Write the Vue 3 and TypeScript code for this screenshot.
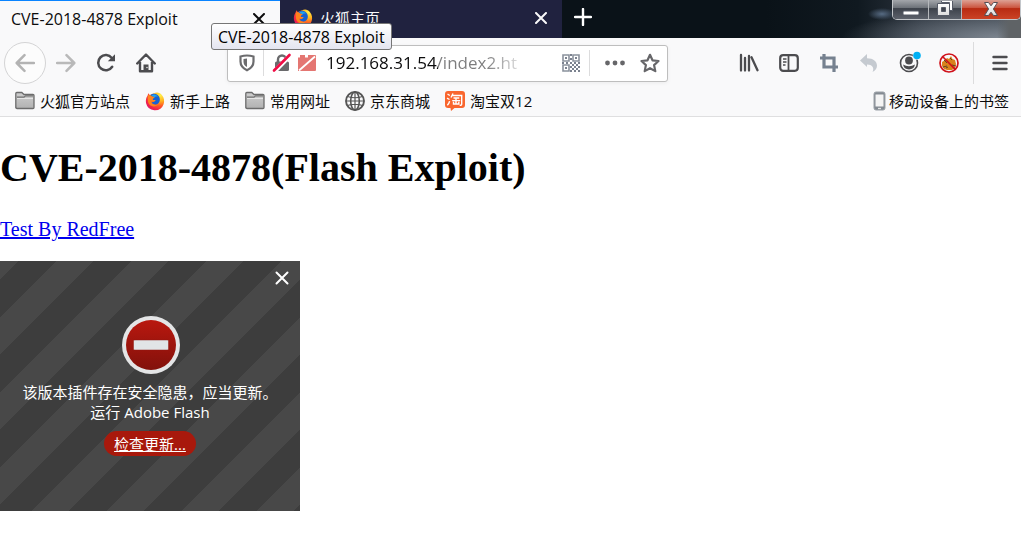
<script setup lang="ts">
import { ref } from 'vue'

interface Bookmark {
  label: string
  icon: string
}

const title = 'CVE-2018-4878 Exploit'
const address = ref('192.168.31.54/index2.ht')

const bookmarks: Bookmark[] = [
  { label: '火狐官方站点', icon: 'folder' },
  { label: '新手上路', icon: 'firefox' },
  { label: '常用网址', icon: 'folder' },
  { label: '京东商城', icon: 'globe' },
  { label: '淘宝双12', icon: 'taobao' },
]
</script>

<template>
  <div class="browser">
    <svg class="sprite" aria-hidden="true">
      <defs>
        <radialGradient id="fox-body" cx="0.8" cy="0.15" r="1">
          <stop offset="0" stop-color="#fff04a" />
          <stop offset="0.35" stop-color="#ffb01e" />
          <stop offset="0.6" stop-color="#ff5a24" />
          <stop offset="0.85" stop-color="#f0204c" />
          <stop offset="1" stop-color="#d81a6e" />
        </radialGradient>
        <linearGradient id="folder-fill" x1="0" y1="0" x2="0" y2="1">
          <stop offset="0" stop-color="#cfcfcf" />
          <stop offset="1" stop-color="#b2b2b2" />
        </linearGradient>
        <linearGradient id="metal" x1="0" y1="0" x2="0" y2="1">
          <stop offset="0" stop-color="#ffffff" />
          <stop offset="1" stop-color="#dcdcdc" />
        </linearGradient>
        <linearGradient id="stop-fill" x1="0" y1="0" x2="0" y2="1">
          <stop offset="0" stop-color="#b9180f" />
          <stop offset="1" stop-color="#82110b" />
        </linearGradient>
      </defs>
      <symbol id="firefox" viewBox="0 0 20 20">
        <path d="M3.200 2.200 5 4.200C6.500 3 8 2.500 9 2.500 11 .8 15 1 17 4.200c2.200 2.500 2.600 6 1.600 9A9.200 9.200 0 0 1 1 12C.5 9 1.300 6 2.600 4.800Z" fill="url(#fox-body)" />
        <path d="M5 4.200C8 1.500 12.500 2.500 14 5.500c1.800 3.200.7 7.500-3.200 8-3 .4-4.600-1.300-4.600-2.800 1.300.9 2.600.4 3.500-.4.9-.3 1-.9.300-1.300-1.200 0-2.500.2-2.300-1.100.3-.6 1.300-1 1.800-1.600C8 6 6.500 5.500 5 4.200Z" fill="#1761d2" />
        <path d="M6.500 4.200C9 2.600 12.300 3.600 13 6c-1.500-1-3-.4-3.500.3C8.700 5.700 7.400 5.500 6.500 4.200Z" fill="#20a4ee" />
        <path d="M2.800 4.500c1.600-.6 3.500-.1 4.500 1.100.7.100 1.500.2 2.200.7-.5.800-1.800 1.100-2.200 1.900.1.900 1.300.9 2.200.9-.3 1.200-2.200 1.600-3.200 1.500.8 3.200 4.500 4.200 7 2.400-2.500 4-9.300 3-10.300-2.500-.3-2-.2-4-.2-6Z" fill="#ff831c" />
      </symbol>
      <symbol id="folder" viewBox="0 0 20 20">
        <path d="M.8 16.500v-14q0-1 1-1h5l2.200 2h9q1 0 1 1v12q0 1-1 1h-16q-1 0-1-1Z" fill="url(#folder-fill)" stroke="#6c6c6c" stroke-width="1.300" />
        <path d="M2 6.200h7l1.500-1.400H18" fill="none" stroke="#727272" stroke-width="1.200" />
        <path d="M2 7.500h16" stroke="#e6e6e6" />
      </symbol>
      <symbol id="globe" viewBox="0 0 20 20">
        <g fill="none" stroke="#555" stroke-width="1.600">
          <circle cx="10" cy="10" r="9" stroke-width="1.900" />
          <ellipse cx="10" cy="10" rx="4.300" ry="9" />
          <path d="M10 1v18M1 10h18M2.500 5.500q7.500 2.500 15 0M2.500 14.500q7.500-2.500 15 0" stroke-width="1.200" />
        </g>
      </symbol>
      <symbol id="taobao" viewBox="0 0 20 20">
        <path d="M3 0h14q3 0 3 3v11q0 3-3 3H9.500L6 20l-.5-3H3q-3 0-3-3V3q0-3 3-3Z" fill="#f9662e" />
        <path d="m2.500 3 2.300 1.500M2 7.200l2.500 1.300M2.300 14.200c1.200-1 2-2.500 2.300-4M8 2.500 6 6.500M7.500 4.500h9.200V13q0 1.500-2 1.200M8.500 7h5.800M7.200 9.600h8M11 7v6M8.500 10.800V13h5.300v-2.200" fill="none" stroke="#fff" stroke-width="1.400" />
      </symbol>
    </svg>

    <header class="titlebar">
      <div class="tab active">
        <span class="tab-title">{{ title }}</span>
        <button class="tab-close" aria-label="关闭标签页">
          <svg width="12" height="12" viewBox="0 0 12 12"><path d="m1 1 10 10M11 1 1 11" stroke="currentColor" stroke-width="2" stroke-linecap="round" /></svg>
        </button>
      </div>
      <div class="tab">
        <svg class="tab-icon" width="20" height="20"><use href="#firefox" /></svg>
        <span class="tab-title">火狐主页</span>
        <button class="tab-close" aria-label="关闭标签页">
          <svg width="12" height="12" viewBox="0 0 12 12"><path d="m1 1 10 10M11 1 1 11" stroke="currentColor" stroke-width="2" stroke-linecap="round" /></svg>
        </button>
      </div>
      <button class="new-tab" aria-label="新建标签页">
        <svg width="18" height="18" viewBox="0 0 18 18"><path d="M9 1v16M1 9h16" stroke="#fff" stroke-width="2.400" stroke-linecap="round" /></svg>
      </button>
      <div class="window-buttons">
        <button class="min" aria-label="最小化">
          <svg width="18" height="16" viewBox="0 0 18 16"><rect x="1" y="10" width="16" height="4" rx="1" fill="#fff" stroke="#555a66" /></svg>
        </button>
        <button class="restore" aria-label="还原">
          <svg width="20" height="16" viewBox="0 0 20 16">
            <path d="M6.500-1.500h11v11h-3v-8h-8Z" fill="#fff" stroke="#555a66" />
            <path d="M2.500 2.500h12v12h-12ZM6.500 6.500v4h4v-4Z" fill="url(#metal)" fill-rule="evenodd" stroke="#555a66" />
          </svg>
        </button>
        <button class="close" aria-label="关闭">
          <svg width="18" height="16" viewBox="0 0 18 16"><path d="M2.500 1.500h4L9 4.800l2.500-3.300h4L11.400 8l4.100 6.500h-4L9 11.200l-2.500 3.300h-4L6.600 8Z" fill="url(#metal)" stroke="#565056" /></svg>
        </button>
      </div>
    </header>
    <div class="tooltip" role="tooltip">{{ title }}</div>

    <nav class="toolbar">
      <button class="back" aria-label="后退">
        <svg width="20" height="20" viewBox="0 0 20 20"><path d="M19 10H2M9.500 2.200 1.700 10l7.800 7.800" fill="none" stroke="#b3b3b3" stroke-width="2.500" stroke-linecap="round" stroke-linejoin="round" /></svg>
      </button>
      <div class="nav-group">
        <button class="tool" aria-label="前进">
          <svg width="20" height="20" viewBox="0 0 20 20"><path d="M1 10h17M10.500 2.200l7.800 7.800-7.800 7.800" fill="none" stroke="#b9b9b9" stroke-width="2.500" stroke-linecap="round" stroke-linejoin="round" /></svg>
        </button>
        <button class="tool" aria-label="刷新">
          <svg width="20" height="20" viewBox="0 0 20 20"><path d="M16.200 13.800A7.600 7.600 0 1 1 15.800 5" fill="none" stroke="#4c4c4f" stroke-width="2.500" stroke-linecap="round" /><path d="M19 1.200v7h-7.200Z" fill="#4c4c4f" /></svg>
        </button>
        <button class="tool" aria-label="主页">
          <svg width="20" height="20" viewBox="0 0 20 20"><path d="m1.200 10.500 8.800-9 8.800 9M4 9v9.300h12V9" fill="none" stroke="#4c4c4f" stroke-width="2.400" stroke-linecap="round" stroke-linejoin="round" /><path d="M7.500 18v-6.500h5V18Z" fill="#4c4c4f" /><circle cx="11" cy="14.500" r=".8" fill="#ddd" /></svg>
        </button>
      </div>
      <div class="urlbar">
        <button class="tool small" aria-label="跟踪保护">
          <svg width="18" height="20" viewBox="0 0 18 20"><path d="M9 2.500c2.300 0 4.500.4 6.500 1v5c0 4.200-2.800 7-6.500 8.700-3.700-1.700-6.500-4.500-6.500-8.700v-5c2-.6 4.200-1 6.500-1Z" fill="none" stroke="#6c6c6e" stroke-width="2.200" /><path d="M9 5.500v8.500c-2.600-1.200-3.500-3.200-3.500-5.500V6Q7 5.500 9 5.500Z" fill="#6c6c6e" /></svg>
        </button>
        <span class="divider"></span>
        <svg width="20" height="20" viewBox="0 0 20 20"><path d="M6 9V6.500a4 4 0 0 1 8 0V9" fill="none" stroke="#6a6a6c" stroke-width="2.400" /><rect x="3" y="8.500" width="14" height="9.500" rx="1.500" fill="#6a6a6c" /><path d="M2.500 18.500 18.500 2" stroke="#fff" stroke-width="4.500" /><path d="M2 17.500 17.500 2" stroke="#f00d45" stroke-width="2.600" stroke-linecap="round" /></svg>
        <svg class="plugin-blocked" width="20" height="20" viewBox="0 0 20 20"><path d="M1 4.500h2V2h5v2.500h3V2h7q1 0 1 1v14q0 1-1 1H1Z" fill="#e47672" /><path d="M2 17.500 18 3.500" stroke="#fff" stroke-width="1.800" /></svg>
        <input v-model="address" class="address" type="text" aria-label="地址" spellcheck="false" />
        <button class="tool small" aria-label="二维码">
          <svg width="18" height="18" viewBox="0 0 18 18"><g fill="none" stroke="#8b929d" stroke-width="1.600"><path d="M1 1h6v6H1ZM11 1h6v6h-6ZM1 11h6v6H1Z" /></g><path d="M3 3h2v2H3ZM13 3h2v2h-2ZM3 13h2v2H3ZM8 0h2v2H8ZM8 4h2v2H8ZM0 8h2v2H0ZM4 8h2v2H4ZM8 8h2v2H8ZM12 8h2v2h-2ZM16 8h2v2h-2ZM10 10h2v2h-2ZM14 10h2v2h-2ZM8 12h2v2H8ZM12 12h2v2h-2ZM16 12h2v2h-2ZM10 14h2v2h-2ZM14 14h2v2h-2ZM8 16h2v2H8ZM12 16h2v2h-2ZM16 16h2v2h-2Z" fill="#7b828f" /></svg>
        </button>
        <span class="divider wide"></span>
        <button class="tool small dots" aria-label="页面操作">
          <svg width="20" height="20" viewBox="0 0 20 20"><g fill="#666669"><circle cx="2.500" cy="10" r="2.400" /><circle cx="10" cy="10" r="2.400" /><circle cx="17.500" cy="10" r="2.400" /></g></svg>
        </button>
        <button class="tool small" aria-label="收藏">
          <svg width="20" height="20" viewBox="0 0 20 20"><path d="m10 1.800 2.500 5.500 6 .7-4.400 4.100 1.200 6L10 15.200l-5.300 2.900 1.200-6L1.500 8l6-.7Z" fill="none" stroke="#666669" stroke-width="2.200" stroke-linejoin="round" /></svg>
        </button>
      </div>
      <div class="actions">
        <button class="tool" aria-label="书库">
          <svg width="20" height="20" viewBox="0 0 20 20"><path d="M2 2v15.500M6 5v12.500M10 3v14.500M12.500 4.200l6 13" fill="none" stroke="#4c4c4f" stroke-width="2.300" stroke-linecap="round" /></svg>
        </button>
        <button class="tool" aria-label="侧栏">
          <svg width="20" height="20" viewBox="0 0 20 20"><rect x="1.200" y="2.200" width="17.600" height="15.600" rx="3" fill="none" stroke="#4c4c4f" stroke-width="2.200" /><path d="M9.500 3v14" stroke="#4c4c4f" stroke-width="1.800" /><path d="M4 6h3.500M4 9h3.500M4 12h2.500" stroke="#4c4c4f" stroke-width="1.400" /></svg>
        </button>
        <button class="tool" aria-label="截图">
          <svg width="20" height="20" viewBox="0 0 20 20"><path d="M5 1v13h14M1 5h14v14" fill="none" stroke="#76818f" stroke-width="3.200" /></svg>
        </button>
        <button class="tool" aria-label="撤销">
          <svg width="20" height="20" viewBox="0 0 20 20"><path d="M1 7.500 8 1v4.200c6.500 0 10 3.300 10 7.500 0 2.500-1.500 4.800-4.500 6.300 1.600-2.500 1.200-7.500-5.500-7.500V14Z" fill="#c5cad0" /></svg>
        </button>
        <button class="tool" aria-label="账户">
          <svg width="24" height="24" viewBox="0 0 24 24"><circle cx="12" cy="12" r="8.500" fill="none" stroke="#4c4c4f" stroke-width="1.600" /><circle cx="12" cy="9.500" r="3.900" fill="#4c4c4f" /><path d="M6 13.500q6 3.500 12 0-1 4.800-6 5-5-.2-6-5Z" fill="#4c4c4f" /><circle cx="20" cy="4.500" r="4.200" fill="#f9f9fa" /><circle cx="20" cy="4.500" r="3.800" fill="#00b0f4" /></svg>
        </button>
        <button class="tool" aria-label="禁用扩展">
          <svg width="20" height="20" viewBox="0 0 20 20"><path d="m3 9 3-2 2-2 2 1 2-3 1.500 3 2.500 1 1 4-1 4-3 2H8l-3-1-2-3Z" fill="#d9821c" /><path d="m5 7 3 3M11 5l2 2M8 13l-4 1M13 12l4 1M7 15l2-1" stroke="#604622" /><circle cx="10" cy="10" r="9" fill="none" stroke="#d0121b" stroke-width="1.700" /><path d="m4 4 12.300 12.300" stroke="#d0121b" stroke-width="1.700" /></svg>
        </button>
        <span class="menu-divider"></span>
        <button class="tool menu" aria-label="菜单">
          <svg width="16" height="18" viewBox="0 0 16 18"><path d="M1.500 3h13M1.500 9h13M1.500 15h13" stroke="#4c4c4f" stroke-width="2.400" stroke-linecap="round" /></svg>
        </button>
      </div>
    </nav>

    <nav class="bookmarks">
      <a v-for="mark in bookmarks" :key="mark.label" class="bookmark" href="#">
        <svg width="20" height="20"><use :href="'#' + mark.icon" /></svg>
        <span>{{ mark.label }}</span>
      </a>
      <a class="bookmark mobile" href="#">
        <svg width="13" height="20" viewBox="0 0 13 20"><rect x="1" y="1" width="11" height="18" rx="2" fill="#848b92" stroke="#9ba1a7" /><rect x="2.500" y="3.500" width="8" height="12" fill="#f4f4f4" /><path d="M5 17.500h3" stroke="#e5e5e5" stroke-width="1.300" /></svg>
        <span>移动设备上的书签</span>
      </a>
    </nav>

    <main class="page">
      <h1>CVE-2018-4878(Flash Exploit)</h1>
      <p><a class="author" href="#">Test By RedFree</a></p>
      <section class="plugin">
        <button class="plugin-close" aria-label="关闭">
          <svg width="14" height="14" viewBox="0 0 14 14"><path d="m1.500 1.500 11 11M12.500 1.500l-11 11" stroke="#fff" stroke-width="2" stroke-linecap="round" /></svg>
        </button>
        <svg class="stop" width="60" height="60" viewBox="0 0 60 60"><circle cx="31" cy="30" r="29" fill="#e4e5e6" /><circle cx="31" cy="30" r="25" fill="url(#stop-fill)" /><rect x="13.500" y="25" width="35" height="10" rx="1" fill="#e1e4e7" stroke="#8f1a14" stroke-opacity=".5" /></svg>
        <p class="message">该版本插件存在安全隐患，应当更新。</p>
        <p class="message">运行 Adobe Flash</p>
        <a class="update" href="#">检查更新...</a>
      </section>
    </main>
  </div>
</template>

<style>
body {
  background: #fff;
}
</style>

<style scoped>
.browser {
  position: relative;
  min-height: 100vh;
  overflow: hidden;
  color: #000;
  font: 15px/20px "Open Sans", "Noto Sans CJK SC", sans-serif;
}

.sprite {
  position: absolute;
  width: 0;
  height: 0;
}

svg {
  display: block;
  flex: none;
}

button {
  display: flex;
  flex: none;
  align-items: center;
  justify-content: center;
  padding: 0;
  border: 0;
  background: none;
  color: inherit;
}

.titlebar {
  display: flex;
  align-items: flex-start;
  height: 38px;
  background:
    radial-gradient(ellipse 14px 6px at right 139px top 14px, #566a82, transparent),
    linear-gradient(to right, transparent, #5f6366 50%) right / 24px 100% no-repeat,
    radial-gradient(ellipse 160px 30px at right 20px bottom 0, #7d8690, transparent),
    linear-gradient(to right, #0a1218 75%, #101920 84%, #2a323c 90%, #3c444e);
}

.tab {
  box-sizing: border-box;
  display: flex;
  flex: none;
  align-items: center;
  width: 282px;
  height: 38px;
  padding: 0 14px 2px 13px;
  background: #20223f;
  color: #f9f9fa;
}

.tab.active {
  width: 280px;
  padding-left: 11px;
  border-top: 1px solid #0a84ff;
  background: #f9f9fa;
  color: #0c0c0d;
}

.tab-icon {
  margin-right: 7px;
}

.tab-title {
  flex: 1;
  font-size: 15px;
}

.active .tab-title {
  font-size: 16px;
}

.tab-close {
  width: 14px;
  height: 14px;
}

.new-tab {
  width: 42px;
  height: 34px;
}

.window-buttons {
  display: flex;
  height: 19px;
  margin-left: auto;
  border: 1px solid #c3c6ca;
  border-top: 0;
  border-radius: 0 0 5px 5px;
  overflow: hidden;
}

.window-buttons button {
  width: 36px;
  background: linear-gradient(#a3a6ab, #6e737a 40%, #3d424b 45%, #5c616b);
  border-right: 1px solid #b5b8bc;
}

.window-buttons .restore {
  width: 33px;
}

.window-buttons .close {
  width: 58px;
  border-right: 0;
  background: linear-gradient(#dda194, #cc5640 40%, #b82b12 45%, #cb4325);
}

.window-buttons svg {
  margin-bottom: 2px;
}

.tooltip {
  position: absolute;
  top: 23px;
  left: 211px;
  z-index: 1;
  padding: 3px 6px 2px;
  border: 1px solid #767676;
  border-radius: 3px;
  background: linear-gradient(#fff, #e4e5f0);
  font-size: 16px;
  white-space: nowrap;
}

.toolbar {
  display: flex;
  align-items: center;
  height: 50px;
  background: #f9f9fa;
}

.back {
  box-sizing: border-box;
  width: 42px;
  height: 42px;
  margin-left: 4px;
  border: 1px solid #d4d4d5;
  border-radius: 50%;
  background: #fcfcfc;
}

.tool {
  width: 40px;
  height: 40px;
}

.nav-group {
  display: flex;
}

.urlbar {
  box-sizing: border-box;
  display: flex;
  flex: 1;
  align-items: center;
  min-width: 0;
  height: 37px;
  margin-left: 61px;
  padding: 0 7px 0 9px;
  border: 1px solid #bebebe;
  border-radius: 3px;
  background: #fff;
  box-shadow: 0 1px 4px rgba(0, 0, 0, 0.06);
}

.small {
  width: 20px;
}

.divider {
  flex: none;
  width: 1px;
  height: 26px;
  margin: 0 8px 0 6px;
  background: #dcdcdd;
}

.divider.wide {
  margin-left: 8px;
}

.plugin-blocked {
  margin: 0 9px 0 5px;
}

.address {
  flex: 1;
  min-width: 0;
  height: 26px;
  margin-right: 34px;
  padding: 0;
  border: 0;
  outline: 0;
  background: linear-gradient(to right, #0c0c0d 112px, #7c7c7d 112px, #7c7c7d 160px, #fff 204px);
  background-clip: text;
  -webkit-text-fill-color: transparent;
  font: 17px/26px "Open Sans", "Noto Sans CJK SC", sans-serif;
}

.dots {
  margin: 0 15px 0 7px;
}

.actions {
  display: flex;
  flex: none;
  align-items: center;
  margin-left: 61px;
}

.menu-divider {
  width: 1px;
  height: 42px;
  margin-left: 4px;
  background: #dcdcdd;
}

.menu {
  width: 47px;
  padding-left: 5px;
}

.bookmarks {
  display: flex;
  gap: 15px;
  height: 28px;
  padding: 0 12px 0 15px;
  border-bottom: 1px solid #dfdfe0;
  background: #f9f9fa;
}

.bookmark {
  display: flex;
  align-items: center;
  gap: 5px;
  height: 26px;
  color: #0c0c0d;
  text-decoration: none;
  white-space: nowrap;
}

.mobile {
  gap: 3px;
  margin-left: auto;
}

.page {
  font-family: "Liberation Serif", serif;
}

h1 {
  margin: 28px 0 26px;
  font-size: 40px;
  line-height: 46px;
}

.page p {
  margin: 0;
}

.author {
  color: #00e;
  font-size: 20px;
  line-height: 24px;
}

.plugin {
  position: relative;
  display: flex;
  flex-direction: column;
  align-items: center;
  box-sizing: border-box;
  width: 300px;
  height: 250px;
  margin-top: 20px;
  padding-top: 54px;
  background: linear-gradient(135deg, #484848 12.5%, #3d3d3d 12.5%, #3d3d3d 37.5%, #484848 37.5%, #484848 62.5%, #3d3d3d 62.5%, #3d3d3d 87.5%, #484848 87.5%) 0 0 / 75px 75px;
  color: #fff;
  font-family: "Open Sans", "Noto Sans CJK SC", sans-serif;
}

.plugin-close {
  position: absolute;
  top: 9px;
  right: 10px;
  width: 16px;
  height: 16px;
}

.stop {
  margin-bottom: 7px;
}

.message {
  white-space: nowrap;
}

.update {
  margin-top: 9px;
  padding: 3px 10px 2px;
  border-radius: 13px;
  background: #a8190c;
  color: #fff;
}
</style>
